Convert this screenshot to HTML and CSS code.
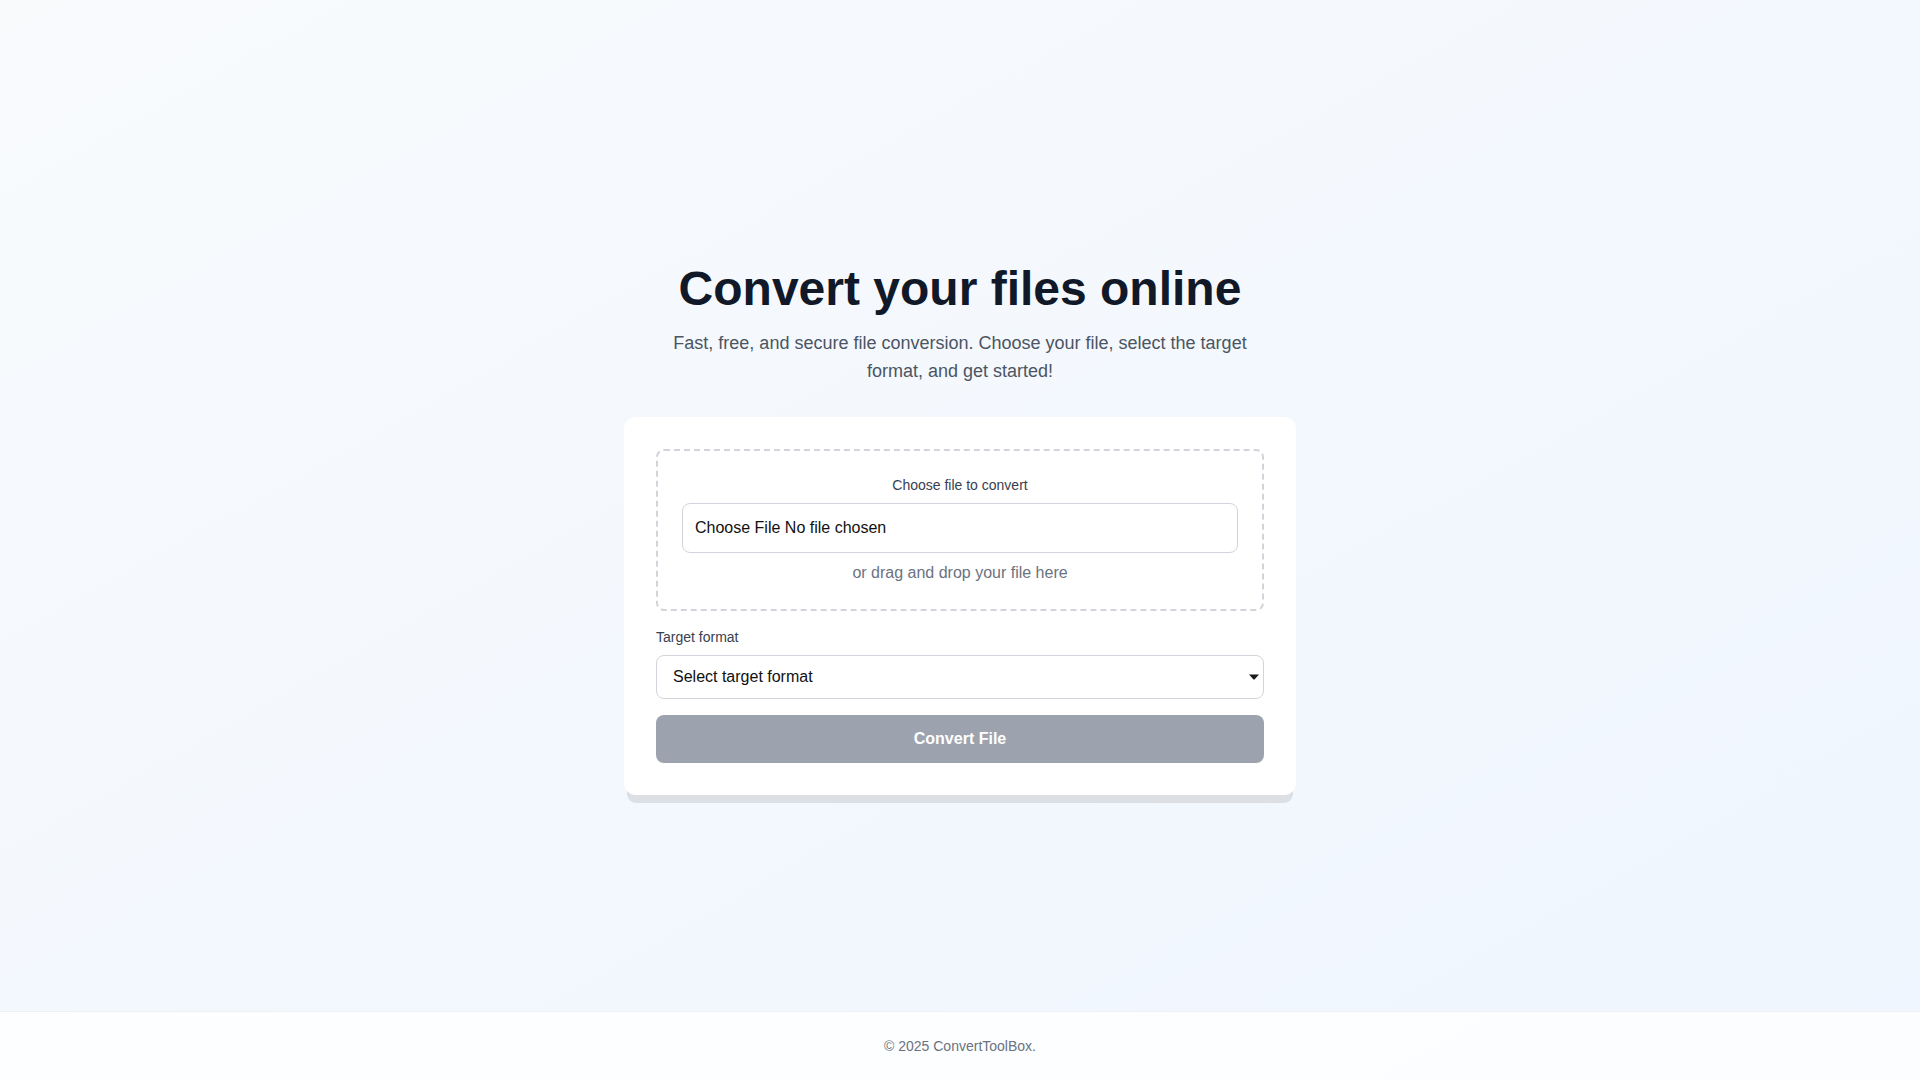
FILE: index.html
```html
<!DOCTYPE html>
<html lang="en">
<head>
<meta charset="utf-8">
<title>ConvertToolBox</title>
<link rel="stylesheet" href="styles.css">
</head>
<body>
<main class="main">
  <h1 class="title">Convert your files online</h1>
  <p class="subtitle">Fast, free, and secure file conversion. Choose your file, select the target format, and get started!</p>
  <div class="card">
    <div class="dropzone">
      <div class="drop-label">Choose file to convert</div>
      <div class="filebox"><span>Choose File</span> <span>No file chosen</span></div>
      <div class="hint">or drag and drop your file here</div>
    </div>
    <div class="field-label">Target format</div>
    <div class="select">
      <span>Select target format</span>
      <svg class="arrow" width="10" height="6" viewBox="0 0 10 6"><path d="M0 0.5 H10 L5.5 5.5 H4.5 Z" fill="#1a1a1a"/></svg>
    </div>
    <button class="convert" type="button">Convert File</button>
  </div>
</main>
<footer class="footer">© 2025 ConvertToolBox.</footer>
</body>
</html>
```

FILE: styles.css
```css
* { box-sizing: border-box; }
html, body { margin: 0; padding: 0; }
body {
  min-height: 100vh;
  display: flex;
  flex-direction: column;
  font-family: "Liberation Sans", Arial, sans-serif;
  background: linear-gradient(to bottom right, #f8fafc, #eff6ff);
  color: #111827;
}
.main {
  flex: 1;
  display: flex;
  flex-direction: column;
  align-items: center;
  padding-top: 265px;
}
.title {
  margin: 0 0 16px;
  font-size: 48px;
  line-height: 48px;
  font-weight: 700;
  color: #111827;
  text-align: center;
}
.subtitle {
  margin: 0 0 32px;
  max-width: 590px;
  font-size: 18px;
  line-height: 28px;
  color: #4b5563;
  text-align: center;
}
.card {
  width: 672px;
  padding: 32px;
  background: #ffffff;
  border-radius: 12px;
  box-shadow: 0 11px 0 -3px #dcdfe4;
}
.dropzone {
  border: 2px dashed #d1d5db;
  border-radius: 8px;
  padding: 24px;
  text-align: center;
  margin-bottom: 16px;
}
.drop-label {
  font-size: 14px;
  line-height: 20px;
  color: #374151;
  margin-bottom: 8px;
}
.filebox {
  border: 1px solid #d1d5db;
  border-radius: 8px;
  padding: 12px 12px;
  font-size: 16px;
  line-height: 24px;
  color: #111111;
  text-align: left;
}
.hint {
  margin-top: 8px;
  font-size: 16px;
  line-height: 24px;
  color: #6b7280;
}
.field-label {
  font-size: 14px;
  line-height: 20px;
  color: #374151;
  margin-bottom: 8px;
}
.select {
  position: relative;
  height: 44px;
  border: 1px solid #d1d5db;
  border-radius: 8px;
  padding: 0 16px;
  display: flex;
  align-items: center;
  font-size: 16px;
  color: #111111;
}
.arrow {
  position: absolute;
  right: 4px;
  top: 18px;
}
.convert {
  display: block;
  width: 100%;
  height: 48px;
  margin-top: 16px;
  border: 0;
  border-radius: 8px;
  background: #9ca3af;
  color: #ffffff;
  font-family: "Liberation Sans", Arial, sans-serif;
  font-size: 16px;
  font-weight: 700;
  line-height: 24px;
}
.footer {
  border-top: 1px solid #eef0f3;
  background: rgba(255, 255, 255, 0.8);
  padding: 24px;
  font-size: 14px;
  line-height: 20px;
  color: #6b7280;
  text-align: center;
}
```
